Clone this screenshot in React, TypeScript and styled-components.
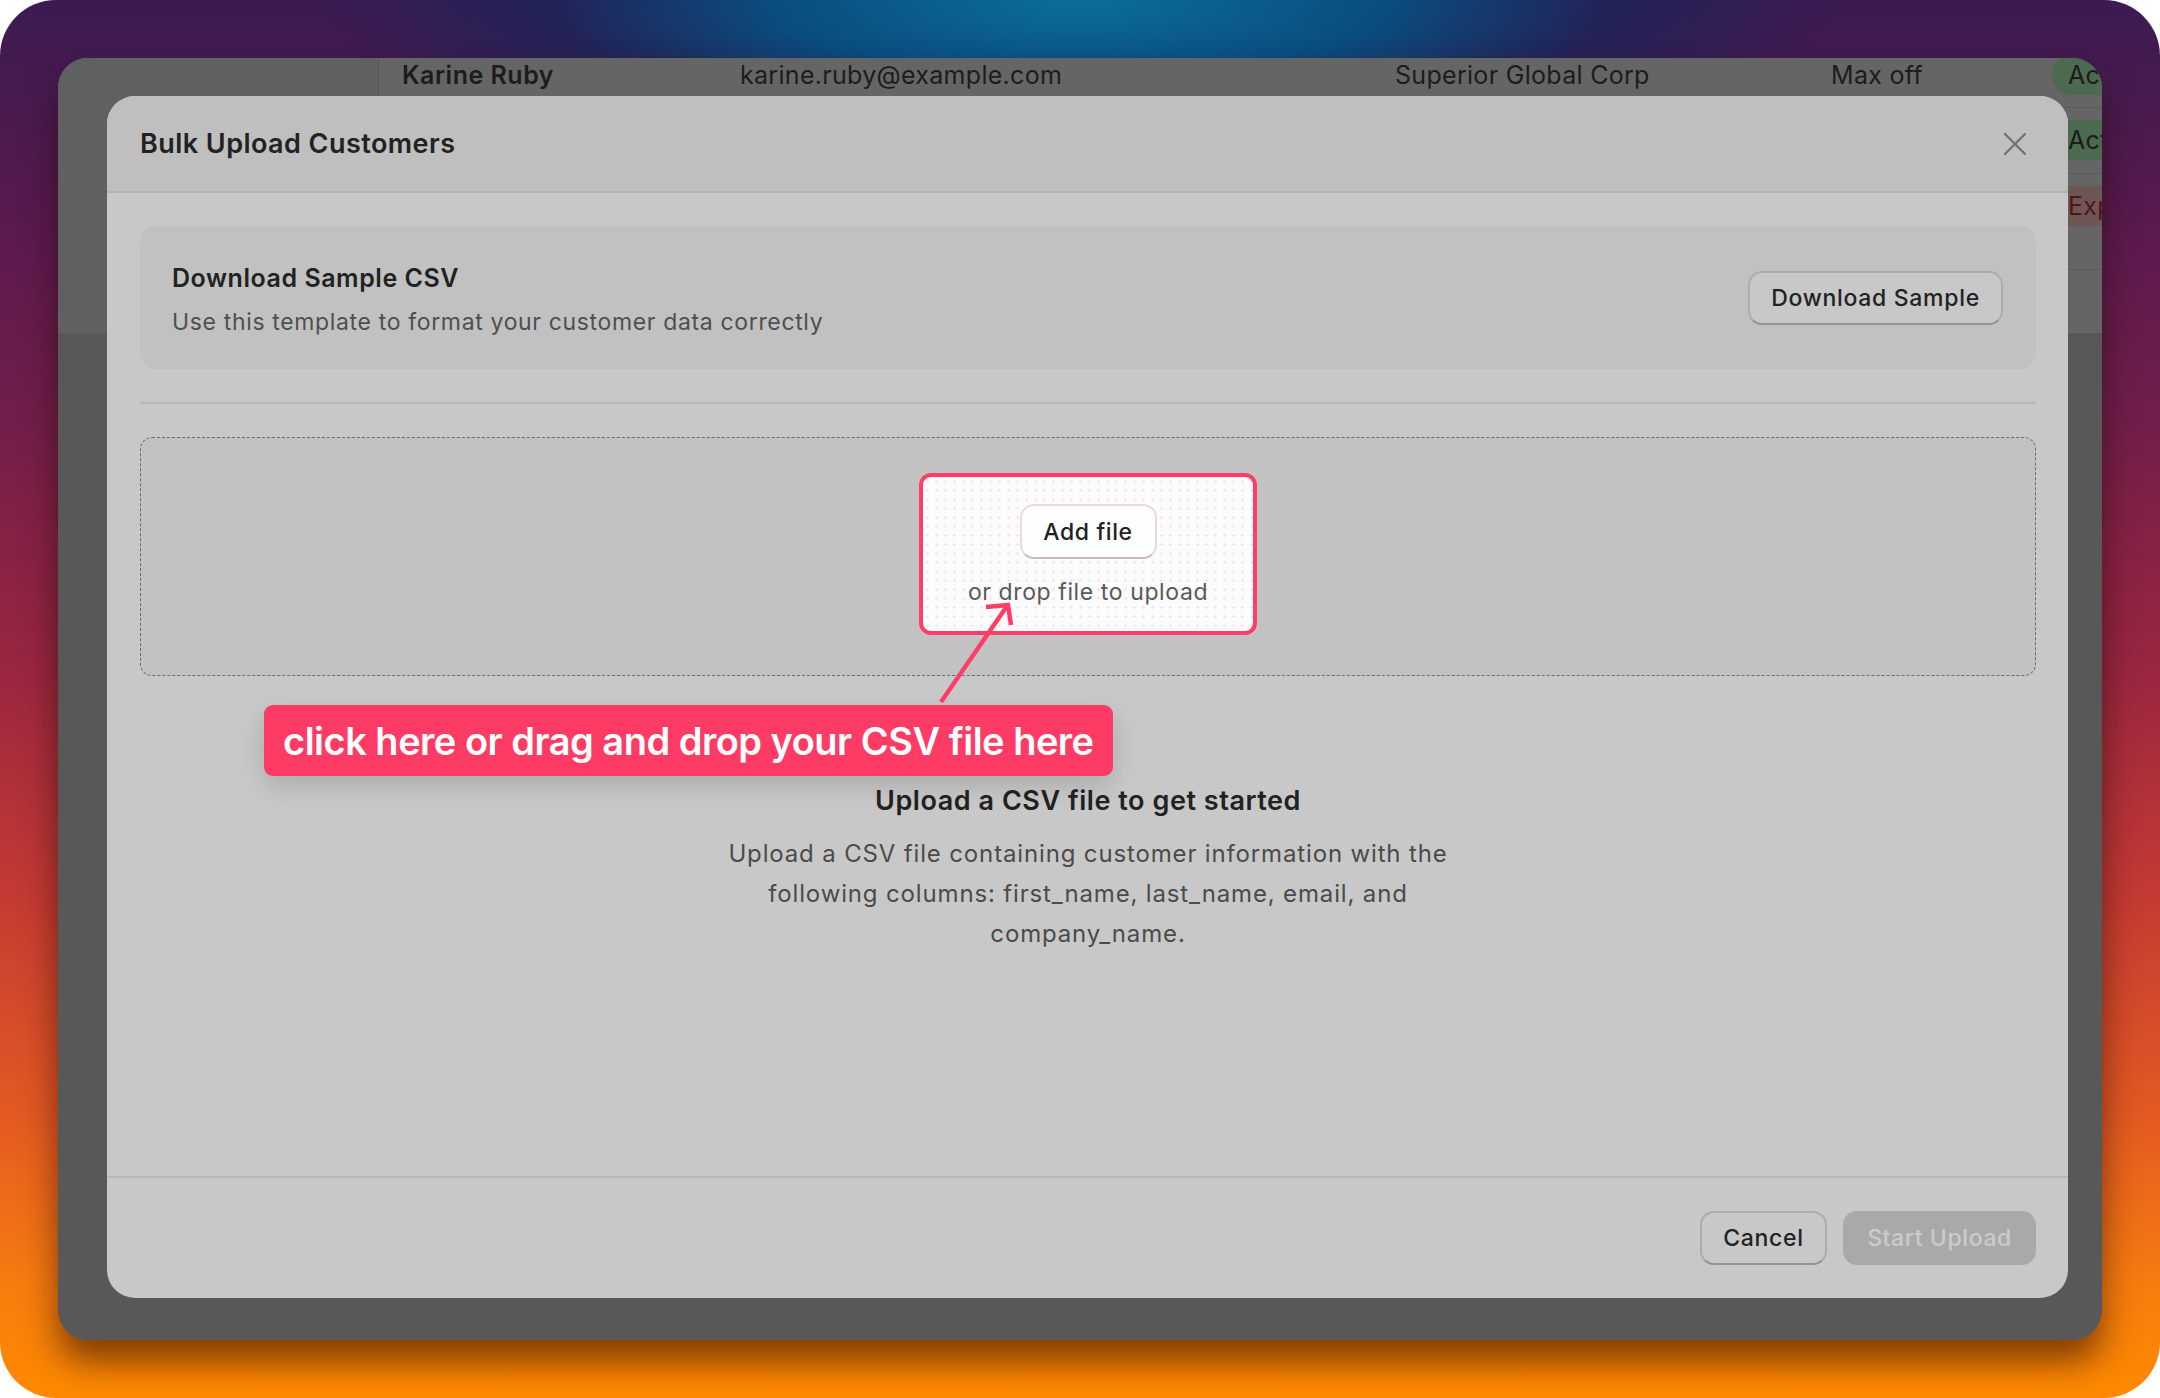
import React from "react";
import styled, { createGlobalStyle } from "styled-components";

const GlobalStyle = createGlobalStyle`
  html, body { margin: 0; padding: 0; background: #ffffff; }
  body { font-family: Inter, "Noto Sans", "Liberation Sans", sans-serif; }
  * { box-sizing: border-box; }
`;

const Frame = styled.div`
  width: 2160px;
  height: 1398px;
  padding: 58px;
  border-radius: 56px;
  background:
    radial-gradient(ellipse 760px 190px at 50% 0%, #0b6f9b 0%, #0a4d80 40%, rgba(12, 40, 90, 0.55) 70%, rgba(40, 28, 80, 0) 100%),
    linear-gradient(180deg, #3b1b52 0%, #561a4e 14%, #721e4a 30%, #9a2640 48%, #c43a33 64%, #e45a22 80%, #f77c0e 92%, #ff8a00 100%);
`;

const Window = styled.div`
  position: relative;
  width: 100%;
  height: 100%;
  border-radius: 30px;
  overflow: hidden;
  background: #585858;
  box-shadow: 0 22px 34px rgba(30, 8, 0, 0.55);
`;

const TopArea = styled.div`
  display: flex;
  height: 277px;
  background: #656565;
  border-bottom: 1px solid #535353;
`;

const Sidebar = styled.div`
  width: 321px;
  flex: none;
  background: #606060;
  border-right: 1px solid #575757;
`;

const TableBody = styled.div`
  flex: 1;
  display: flex;
  flex-direction: column;
  margin-top: -15px;
`;

const Row = styled.div<{ $h: number }>`
  display: grid;
  grid-template-columns: 338px 655px 436px 221px 1fr;
  height: ${(p) => p.$h}px;
  border-bottom: 1px solid #5a5a5a;
`;

const Cell = styled.div<{ $bold?: boolean; $top?: boolean }>`
  display: flex;
  align-items: ${(p) => (p.$top ? "flex-start" : "center")};
  padding-top: ${(p) => (p.$top ? "12px" : "0")};
  padding-left: 23px;
  font-size: 25px;
  letter-spacing: ${(p) => (p.$bold ? "0.5px" : "0.3px")};
  font-weight: ${(p) => (p.$bold ? 600 : 400)};
  color: #1c1c1c;
  white-space: nowrap;
  overflow: hidden;
`;

const Badge = styled.span<{ $tone: "green" | "red" }>`
  display: inline-flex;
  align-items: center;
  height: 40px;
  padding: 0 16px;
  border-radius: 20px;
  font-size: 25px;
  background: ${(p) => (p.$tone === "green" ? "#4b6a4f" : "#6c5656")};
  color: ${(p) => (p.$tone === "green" ? "#1b1b1b" : "#551414")};
`;

const Modal = styled.div`
  position: absolute;
  left: 49px;
  top: 38px;
  width: 1961px;
  height: 1202px;
  border-radius: 28px;
  background: #c8c8c8;
  overflow: hidden;
  display: flex;
  flex-direction: column;
`;

const ModalHeader = styled.div`
  height: 97px;
  flex: none;
  display: flex;
  align-items: center;
  justify-content: space-between;
  padding: 0 41px 0 33px;
  background: #bfbfbf;
  border-bottom: 2px solid #b3b3b3;
`;

const ModalTitle = styled.h2`
  margin: 0;
  font-size: 27px;
  font-weight: 600;
  letter-spacing: 0.45px;
  color: #222222;
`;

const CloseButton = styled.button`
  width: 24px;
  height: 24px;
  padding: 0;
  border: 0;
  background: transparent;
  display: flex;
  align-items: center;
  justify-content: center;
`;

const ModalBody = styled.div`
  flex: 1;
  display: flex;
  flex-direction: column;
  padding: 33px 32px 0 33px;
`;

const SampleCard = styled.div`
  height: 143px;
  border-radius: 16px;
  background: #c1c1c1;
  display: flex;
  align-items: center;
  justify-content: space-between;
  padding: 0 33px 0 32px;
`;

const CardText = styled.div`
  display: flex;
  flex-direction: column;
  gap: 10px;
  padding-top: 5px;
`;

const CardTitle = styled.div`
  font-size: 25px;
  font-weight: 600;
  color: #222222;
  line-height: 34px;
  letter-spacing: 0.55px;
`;

const CardSub = styled.div`
  font-size: 23px;
  color: #4f4f4f;
  line-height: 34px;
  letter-spacing: 0.65px;
`;

const OutlineButton = styled.button<{ $w: number }>`
  width: ${(p) => p.$w}px;
  height: 54px;
  padding: 0;
  border-radius: 14px;
  border: 2px solid #acacac;
  border-bottom-color: #939393;
  background: #c8c8c8;
  color: #222222;
  font-family: Inter, "Noto Sans", sans-serif;
  font-size: 23px;
  font-weight: 500;
  letter-spacing: 0.7px;
`;

const DisabledButton = styled.button<{ $w: number }>`
  width: ${(p) => p.$w}px;
  height: 54px;
  padding: 0;
  border-radius: 14px;
  border: 0;
  background: #a9a9a9;
  color: #cbcbcb;
  font-family: Inter, "Noto Sans", sans-serif;
  font-size: 23px;
  font-weight: 500;
  letter-spacing: 0.6px;
`;

const Separator = styled.div`
  height: 2px;
  background: #b7b7b7;
  margin: 33px 0 33px;
`;

const DropZone = styled.div`
  height: 239px;
  padding-bottom: 5px;
  border: 1.5px dashed #6c6c6c;
  border-radius: 12px;
  background: #c2c2c2;
  display: flex;
  align-items: center;
  justify-content: center;
`;

const Highlight = styled.div`
  width: 338px;
  height: 162px;
  border: 4px solid #ff3d67;
  border-radius: 12px;
  background-color: #fdfcfc;
  background-image: radial-gradient(rgba(240, 170, 185, 0.35) 1px, transparent 1.2px);
  background-size: 9px 9px;
  display: flex;
  flex-direction: column;
  align-items: center;
  padding-top: 27px;
  gap: 18px;
`;

const AddFileButton = styled.button`
  width: 137px;
  height: 55px;
  padding: 0;
  border-radius: 14px;
  border: 2px solid #ead9de;
  border-bottom-color: #c9b8bc;
  background: #fefefe;
  color: #222222;
  font-family: Inter, "Noto Sans", sans-serif;
  font-size: 23px;
  font-weight: 500;
  letter-spacing: 0.6px;
`;

const DropHint = styled.div`
  font-size: 23px;
  line-height: 30px;
  color: #595959;
  letter-spacing: 0.6px;
`;

const EmptyState = styled.div`
  margin-top: 108px;
  display: flex;
  flex-direction: column;
  align-items: center;
  text-align: center;
`;

const EmptyTitle = styled.div`
  font-size: 27px;
  font-weight: 600;
  color: #222222;
  line-height: 34px;
  letter-spacing: 0.55px;
`;

const EmptyText = styled.p`
  margin: 16px 0 0;
  max-width: 780px;
  font-size: 24px;
  line-height: 40px;
  color: #4b4b4b;
  letter-spacing: 0.85px;
`;

const ModalFooter = styled.div`
  height: 122px;
  flex: none;
  border-top: 2px solid #b7b7b7;
  display: flex;
  align-items: center;
  justify-content: flex-end;
  gap: 16px;
  padding: 0 32px;
`;

const Callout = styled.div`
  position: absolute;
  left: 157px;
  top: 609px;
  width: 849px;
  height: 71px;
  border-radius: 9px;
  background: #fd3b64;
  color: #ffffff;
  font-size: 38px;
  font-weight: 600;
  letter-spacing: -0.5px;
  display: flex;
  align-items: center;
  padding-left: 19px;
  box-shadow: 0 10px 26px rgba(0, 0, 0, 0.14);
  white-space: nowrap;
`;

const ArrowSvg = styled.svg`
  position: absolute;
  left: 818px;
  top: 500px;
  overflow: visible;
`;

const rows = [
  { h: 66, name: "Karine Ruby", email: "karine.ruby@example.com", company: "Superior Global Corp", plan: "Max off", badge: "Active", tone: "green" as const },
  { h: 66, name: "", email: "", company: "", plan: "", badge: "Active", tone: "green" as const },
  { h: 97, name: "", email: "", company: "", plan: "", badge: "Expired", tone: "red" as const, top: true },
  { h: 65, name: "", email: "", company: "", plan: "", badge: "", tone: "green" as const },
];

export default function App() {
  return (
    <>
      <GlobalStyle />
      <Frame>
        <Window>
          <TopArea>
            <Sidebar />
            <TableBody>
              {rows.map((r, i) => (
                <Row key={i} $h={r.h}>
                  <Cell $bold>{r.name}</Cell>
                  <Cell>{r.email}</Cell>
                  <Cell>{r.company}</Cell>
                  <Cell>{r.plan}</Cell>
                  <Cell $top={r.top}>{r.badge && <Badge $tone={r.tone}>{r.badge}</Badge>}</Cell>
                </Row>
              ))}
            </TableBody>
          </TopArea>

          <Modal>
            <ModalHeader>
              <ModalTitle>Bulk Upload Customers</ModalTitle>
              <CloseButton aria-label="Close">
                <svg width="24" height="24" viewBox="0 0 24 24">
                  <path d="M2 2 L22 22 M22 2 L2 22" stroke="#6f6f6f" strokeWidth="2.2" strokeLinecap="round" fill="none" />
                </svg>
              </CloseButton>
            </ModalHeader>

            <ModalBody>
              <SampleCard>
                <CardText>
                  <CardTitle>Download Sample CSV</CardTitle>
                  <CardSub>Use this template to format your customer data correctly</CardSub>
                </CardText>
                <OutlineButton $w={255}>Download Sample</OutlineButton>
              </SampleCard>

              <Separator />

              <DropZone>
                <Highlight>
                  <AddFileButton>Add file</AddFileButton>
                  <DropHint>or drop file to upload</DropHint>
                </Highlight>
              </DropZone>

              <EmptyState>
                <EmptyTitle>Upload a CSV file to get started</EmptyTitle>
                <EmptyText>
                  Upload a CSV file containing customer information with the following columns: first_name, last_name, email, and company_name.
                </EmptyText>
              </EmptyState>
            </ModalBody>

            <ModalFooter>
              <OutlineButton $w={127}>Cancel</OutlineButton>
              <DisabledButton $w={193}>Start Upload</DisabledButton>
            </ModalFooter>

            <ArrowSvg width="100" height="120" viewBox="0 0 100 120">
              <path d="M16 106 L82 10" stroke="#ff3d67" strokeWidth="4.5" strokeLinecap="butt" fill="none" />
              <path d="M61 11 L83 9 L86 29" stroke="#ff3d67" strokeWidth="4.5" strokeLinecap="butt" strokeLinejoin="miter" fill="none" />
            </ArrowSvg>

            <Callout>click here or drag and drop your CSV file here</Callout>
          </Modal>
        </Window>
      </Frame>
    </>
  );
}
